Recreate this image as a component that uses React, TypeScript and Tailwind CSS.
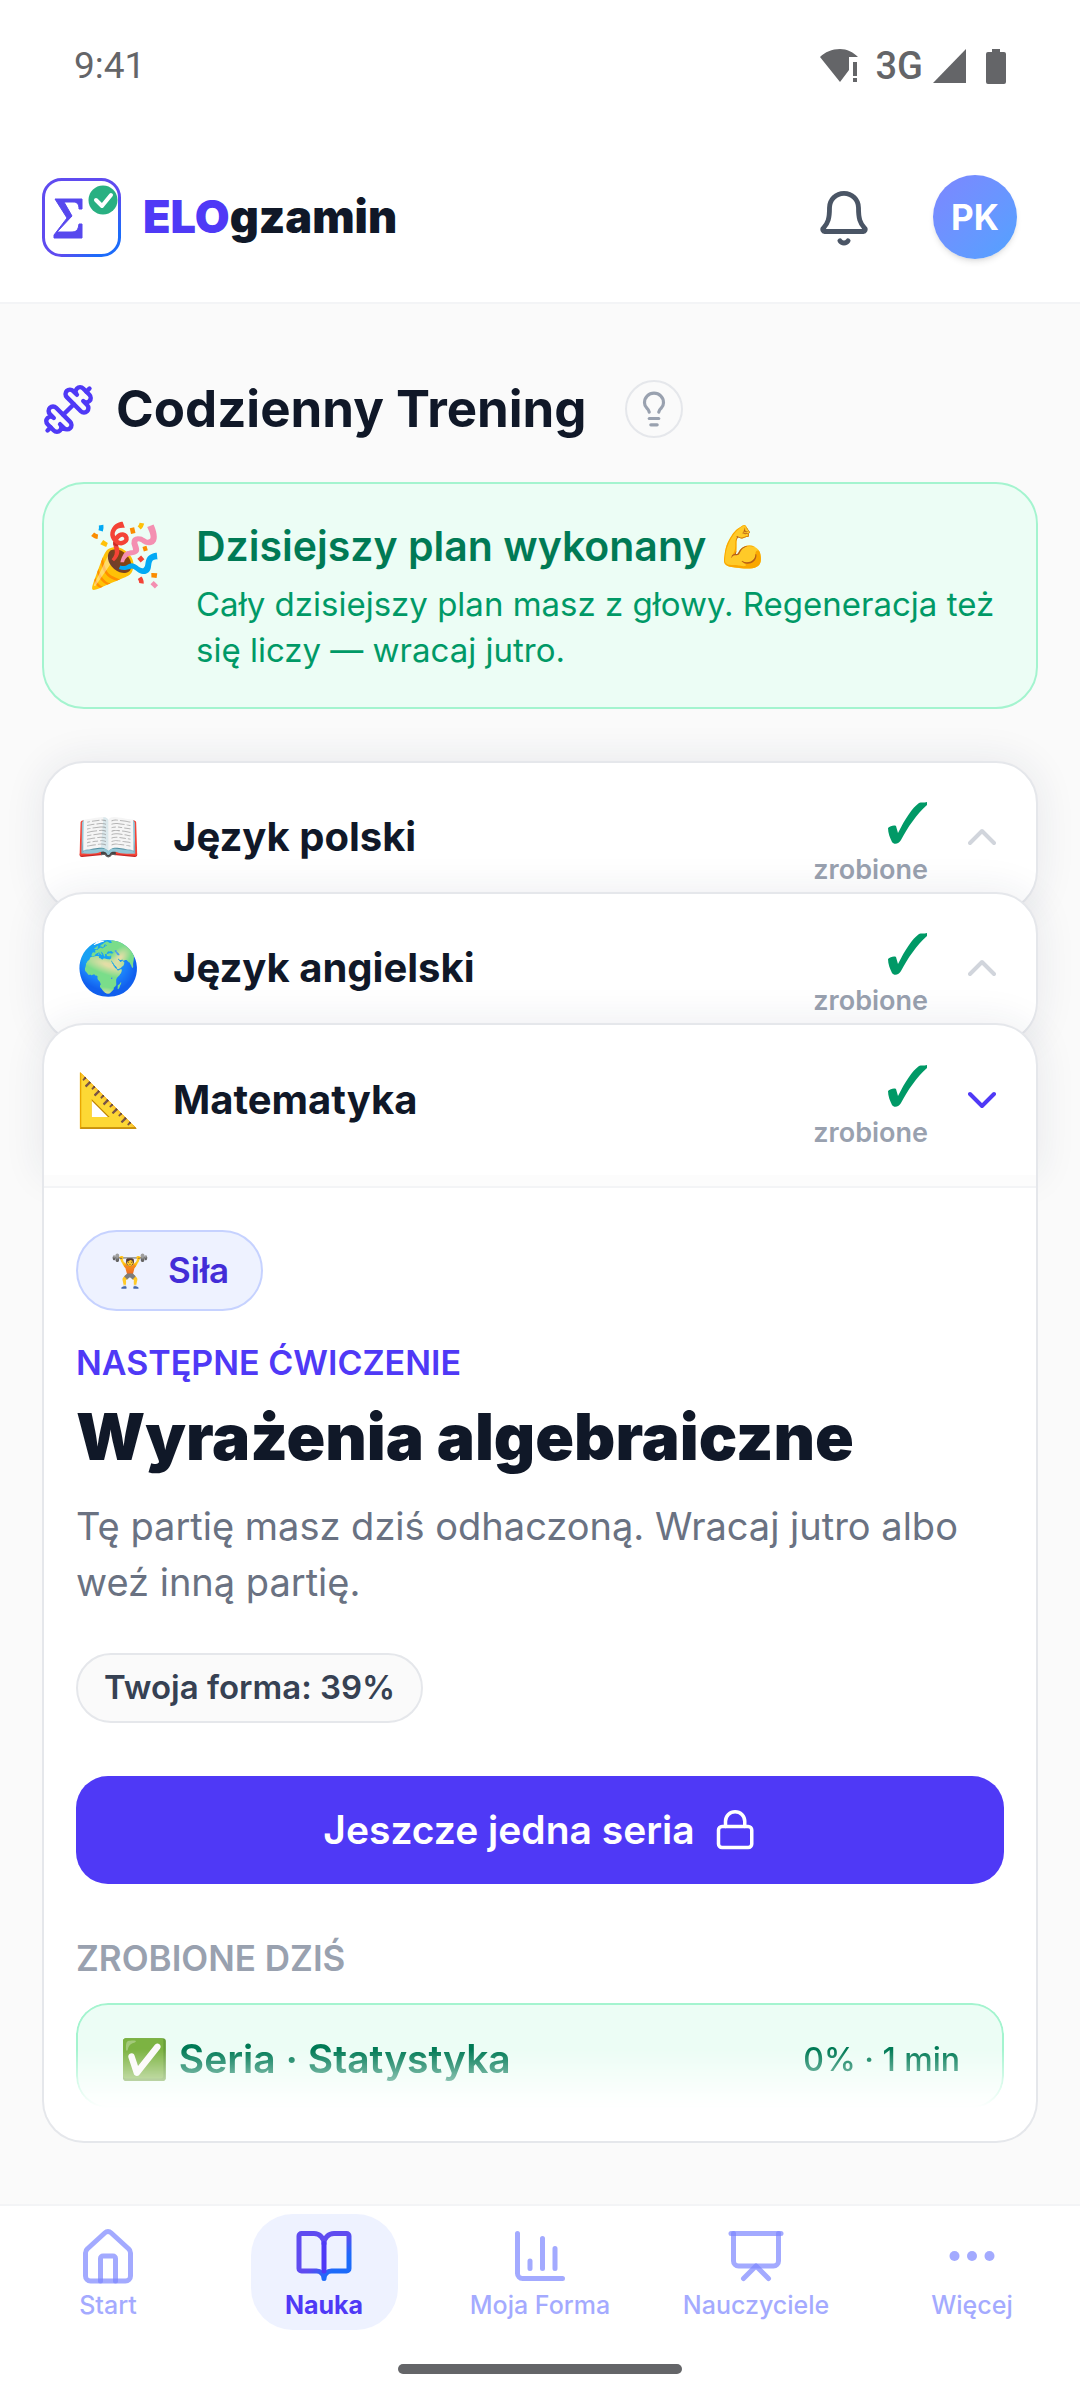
import React from 'react';
import { Dumbbell, Lightbulb } from 'lucide-react';

interface Subject {
  name: string;
  emoji: string;
  open: boolean;
}

const subjects: Subject[] = [
  { name: 'Język polski', emoji: '📖', open: false },
  { name: 'Język angielski', emoji: '🌍', open: false },
  { name: 'Matematyka', emoji: '📐', open: true },
];

const StatusBar: React.FC = () => (
  <div className="h-[132px] px-[74px] flex items-center justify-between text-[#646568] font-[Roboto,sans-serif]">
    <span className="text-[37px]">9:41</span>
    <div className="flex items-center">
      <svg width="40" height="36" viewBox="0 0 40 36" fill="currentColor">
        <path d="M20 1C12 1 5 4 0 9l20 25 9-12V9h9C33 4 27 1 20 1Z" />
        <path d="M33 14h4v14h-4zM33 30h4v4h-4z" />
      </svg>
      <span className="text-[38px] font-medium ml-4 mr-[10px]">3G</span>
      <svg width="33" height="34" viewBox="0 0 33 34" fill="currentColor">
        <path d="M33 0v34H0z" />
      </svg>
      <svg className="ml-5" width="20" height="35" viewBox="0 0 20 35" fill="currentColor">
        <path d="M6 0h8v3h4a2 2 0 0 1 2 2v28a2 2 0 0 1-2 2H2a2 2 0 0 1-2-2V5a2 2 0 0 1 2-2h4z" />
      </svg>
    </div>
  </div>
);

const Logo: React.FC = () => (
  <svg width="79" height="79" viewBox="0 0 79 79" fill="none">
    <defs>
      <linearGradient id="logo" x1="0" y1="0" x2="1" y2="1">
        <stop offset="0.6" stopColor="#5f4bf0" />
        <stop offset="0.85" stopColor="#1c6bfa" />
      </linearGradient>
    </defs>
    <rect x="1.5" y="1.5" width="76" height="76" rx="18" stroke="url(#logo)" strokeWidth="3" />
    <path d="M13 21h27v10h-3c0-5-2-7-6-7h-9l8 14-15 16h14c6 0 7-2 8-8h3v14H12v-3l13-17z" fill="#5748ee" stroke="#5748ee" />
    <circle cx="61" cy="22" r="14.5" fill="#29b082" />
    <path d="m54 22 6 6 9-11" stroke="#fff" strokeWidth="4" strokeLinecap="round" strokeLinejoin="round" />
  </svg>
);

const TopBar: React.FC = () => (
  <header className="h-[172px] pl-[42px] pr-[63px] flex items-center justify-between border-b-2 border-gray-100">
    <div className="flex items-center gap-[22px]">
      <Logo />
      <span className="text-[45px] leading-[64px] font-black text-gray-900">
        <span className="text-indigo-600">ELO</span>gzamin
      </span>
    </div>
    <div className="flex items-center gap-[60px]">
      <button aria-label="Powiadomienia" className="text-gray-600">
        <svg width="58" height="58" viewBox="0 0 24 24" fill="none" stroke="currentColor" strokeWidth="2" strokeLinecap="round" strokeLinejoin="round">
          <path d="M12 2.2a6 6 0 0 0-6 6c0 4.500-.6 6.300-2.500 8.400a.8.8 0 0 0 .6 1.400h15.800a.8.8 0 0 0 .6-1.400C18.600 14.500 18 12.700 18 8.200a6 6 0 0 0-6-6Z" />
          <path d="M10.300 21.800a2 2 0 0 0 3.400 0" />
        </svg>
      </button>
      <button className="size-[84px] rounded-full bg-linear-to-br from-indigo-400 to-blue-400 text-white text-[35px] font-bold shadow-md">
        PK
      </button>
    </div>
  </header>
);

const Check: React.FC = () => (
  <svg width="40" height="42" viewBox="0 0 40 42" className="text-emerald-600" fill="currentColor">
    <path d="M0 26c2-2 6-3 8-2l2 7C17 17 24 6 31 1c2-1 5 0 8-1v3C28 13 20 25 13 38c-2 4-7 5-9 2-2-4-4-9-4-14Z" />
  </svg>
);

const SubjectHeader: React.FC<{ subject: Subject }> = ({ subject }) => (
  <button
    className={`relative w-full h-[152px] px-[32px] flex items-center text-left bg-white border-2 border-gray-200 shadow-[0_0_40px_rgba(30,45,80,0.09)] ${subject.open ? 'rounded-t-[42px] border-b-0' : 'rounded-[42px] mb-[-21px]'}`}
  >
    <span className="w-[97px] text-[52px]">{subject.emoji}</span>
    <span className="flex-1 text-[40px] font-bold text-gray-900">{subject.name}</span>
    <span className="flex flex-col items-end gap-2 pt-4 text-[27px] leading-[36px] font-semibold text-gray-400">
      <Check />
      zrobione
    </span>
    <svg width="28" height="18" viewBox="0 0 28 18" className={`ml-[40px] mr-2 ${subject.open ? 'text-indigo-600' : 'text-gray-300'}`} fill="none" stroke="currentColor" strokeWidth="4" strokeLinecap="round" strokeLinejoin="round">
      <path d={subject.open ? 'm2 3 12 12L26 3' : 'M2 15 14 3l12 12'} />
    </svg>
  </button>
);

const NavIcon: React.FC<{ children: React.ReactNode }> = ({ children }) => (
  <svg width="60" height="60" viewBox="0 0 24 24" fill="none" strokeWidth="2" strokeLinecap="round" strokeLinejoin="round">
    {children}
  </svg>
);

const tabs = [
  {
    label: 'Start',
    icon: (
      <g stroke="#7c86ff" strokeOpacity="0.7">
        <path d="M3 10.800c0-.7.300-1.300.800-1.700l7-6.400a1.800 1.800 0 0 1 2.400 0l7 6.400c.500.400.800 1 .800 1.700v9.200a2 2 0 0 1-2 2H5a2 2 0 0 1-2-2z" />
        <path d="M9 22v-9a1 1 0 0 1 1-1h4a1 1 0 0 1 1 1v9" />
      </g>
    ),
  },
  {
    label: 'Nauka',
    active: true,
    icon: (
      <g stroke="url(#book)">
        <path d="M3 18a1 1 0 0 1-1-1V4a1 1 0 0 1 1-1h5a4 4 0 0 1 4 4 4 4 0 0 1 4-4h5a1 1 0 0 1 1 1v13a1 1 0 0 1-1 1h-6a3 3 0 0 0-3 3 3 3 0 0 0-3-3z" />
        <path d="M12 7v11" stroke="#4f39f6" />
      </g>
    ),
  },
  {
    label: 'Moja Forma',
    icon: (
      <g stroke="#7c86ff" strokeOpacity="0.7">
        <path d="M3 3v16a2 2 0 0 0 2 2h16" />
        <path d="M8 17v-3M13 17V5M18 17V9" />
      </g>
    ),
  },
  {
    label: 'Nauczyciele',
    icon: (
      <g stroke="#7c86ff" strokeOpacity="0.7">
        <path d="M2 3h20" />
        <path d="M21 3v11a2 2 0 0 1-2 2H5a2 2 0 0 1-2-2V3" />
        <path d="m7 21 5-5 5 5" />
      </g>
    ),
  },
  {
    label: 'Więcej',
    icon: (
      <g fill="#7c86ff" fillOpacity="0.7">
        <circle cx="5" cy="12" r="2" />
        <circle cx="12" cy="12" r="2" />
        <circle cx="19" cy="12" r="2" />
      </g>
    ),
  },
];

const BottomNav: React.FC = () => (
  <nav className="bg-white border-t-2 border-gray-100 pt-2">
    <svg width="0" height="0" className="absolute">
      <defs>
        <linearGradient id="book" x1="0" y1="0" x2="1" y2="1">
          <stop offset="0.5" stopColor="#5f4bf0" />
          <stop offset="0.75" stopColor="#1c6bfa" />
        </linearGradient>
      </defs>
    </svg>
    <div className="grid grid-cols-5 justify-items-center">
      {tabs.map(tab => (
        <a
          key={tab.label}
          href="#"
          className={`h-[116px] min-w-[147px] pt-3 flex flex-col items-center text-[25px] leading-[38px] rounded-[42px] ${tab.active ? 'bg-indigo-50 text-indigo-600 font-bold' : 'text-indigo-400/70 font-medium'}`}
        >
          <NavIcon>{tab.icon}</NavIcon>
          {tab.label}
        </a>
      ))}
    </div>
    <div className="pt-[34px] pb-[26px] flex justify-center">
      <div className="w-[284px] h-[10px] rounded-full bg-[#646568]" />
    </div>
  </nav>
);

const App: React.FC = () => (
  <div className="min-h-screen flex flex-col bg-white font-[Inter,'Liberation_Sans',sans-serif]">
    <StatusBar />
    <TopBar />

    <main className="flex-1 bg-[#fafafa] px-[42px] pt-[76px]">
      <div className="flex items-center">
        <Dumbbell size={53} className="text-indigo-600" />
        <h1 className="ml-[21px] text-[51px] leading-[58px] font-bold text-gray-900">Codzienny Trening</h1>
        <button aria-label="Wskazówka" className="ml-[38px] size-[58px] rounded-full border-2 border-gray-200 flex items-center justify-center text-gray-400">
          <Lightbulb size={38} strokeWidth={2} />
        </button>
      </div>

      <section className="mt-[44px] h-[227px] rounded-[42px] border-2 border-emerald-200 bg-emerald-50 pl-[42px] pr-[32px] pt-[35px] flex gap-[33px]">
        <span className="text-[62px] leading-[72px]">🎉</span>
        <div>
          <h2 className="text-[41px] leading-[54px] font-semibold text-emerald-700">Dzisiejszy plan wykonany 💪</h2>
          <p className="mt-2 text-[33px] leading-[46px] text-emerald-600">
            Cały dzisiejszy plan masz z głowy. Regeneracja też się liczy — wracaj jutro.
          </p>
        </div>
      </section>

      <div className="mt-[52px]">
        {subjects.map(s => <SubjectHeader key={s.name} subject={s} />)}
        <div className="relative bg-white border-2 border-t-0 border-gray-200 rounded-b-[42px]">
          <div className="h-[13px] bg-[#fcfcfc] border-b-2 border-gray-100" />
          <div className="px-[32px] pt-[42px] pb-[33px] flex flex-col items-start">
            <button className="h-[81px] px-[32px] rounded-full border-2 border-indigo-200 bg-indigo-50 flex items-center gap-[18px] text-[35px] font-semibold text-indigo-700">
              <span className="text-[32px]">🏋️</span>
              Siła
            </button>
            <p className="mt-[29px] text-[34px] leading-[46px] font-semibold text-indigo-600">NASTĘPNE ĆWICZENIE</p>
            <h2 className="mt-[12px] text-[64px] leading-[78px] font-black text-gray-900">Wyrażenia algebraiczne</h2>
            <p className="mt-[22px] text-[38px] leading-[56px] text-gray-500">
              Tę partię masz dziś odhaczoną. Wracaj jutro albo weź inną partię.
            </p>
            <span className="mt-[43px] h-[70px] px-[26px] rounded-full border-2 border-gray-200 bg-[#fafafa] flex items-center text-[33px] font-semibold text-gray-700">
              Twoja forma: 39%
            </span>
            <button className="mt-[53px] h-[108px] w-full rounded-[32px] bg-indigo-600 text-white text-[39px] font-semibold flex items-center justify-center gap-[20px]">
              Jeszcze jedna seria
              <svg width="42" height="42" viewBox="0 0 24 24" fill="none" stroke="currentColor" strokeWidth="2" strokeLinecap="round" strokeLinejoin="round">
                <rect x="2" y="10" width="19" height="12" rx="2" />
                <path d="M6 10V7a5.500 5.500 0 0 1 11 0v3" />
              </svg>
            </button>
            <h3 className="mt-[51px] text-[35px] leading-[46px] font-semibold text-gray-400">ZROBIONE DZIŚ</h3>
            <div className="mt-[22px] h-[105px] w-full rounded-[32px] border-2 border-emerald-200 bg-emerald-50 px-[42px] pt-2 flex items-center justify-between text-emerald-700 mask-[linear-gradient(to_bottom,black_44%,transparent)]">
              <span className="text-[39px] font-semibold">✅ Seria · Statystyka</span>
              <span className="text-[32px] font-medium">0% · 1 min</span>
            </div>
          </div>
        </div>
      </div>
    </main>

    <BottomNav />
  </div>
);

export default App;
